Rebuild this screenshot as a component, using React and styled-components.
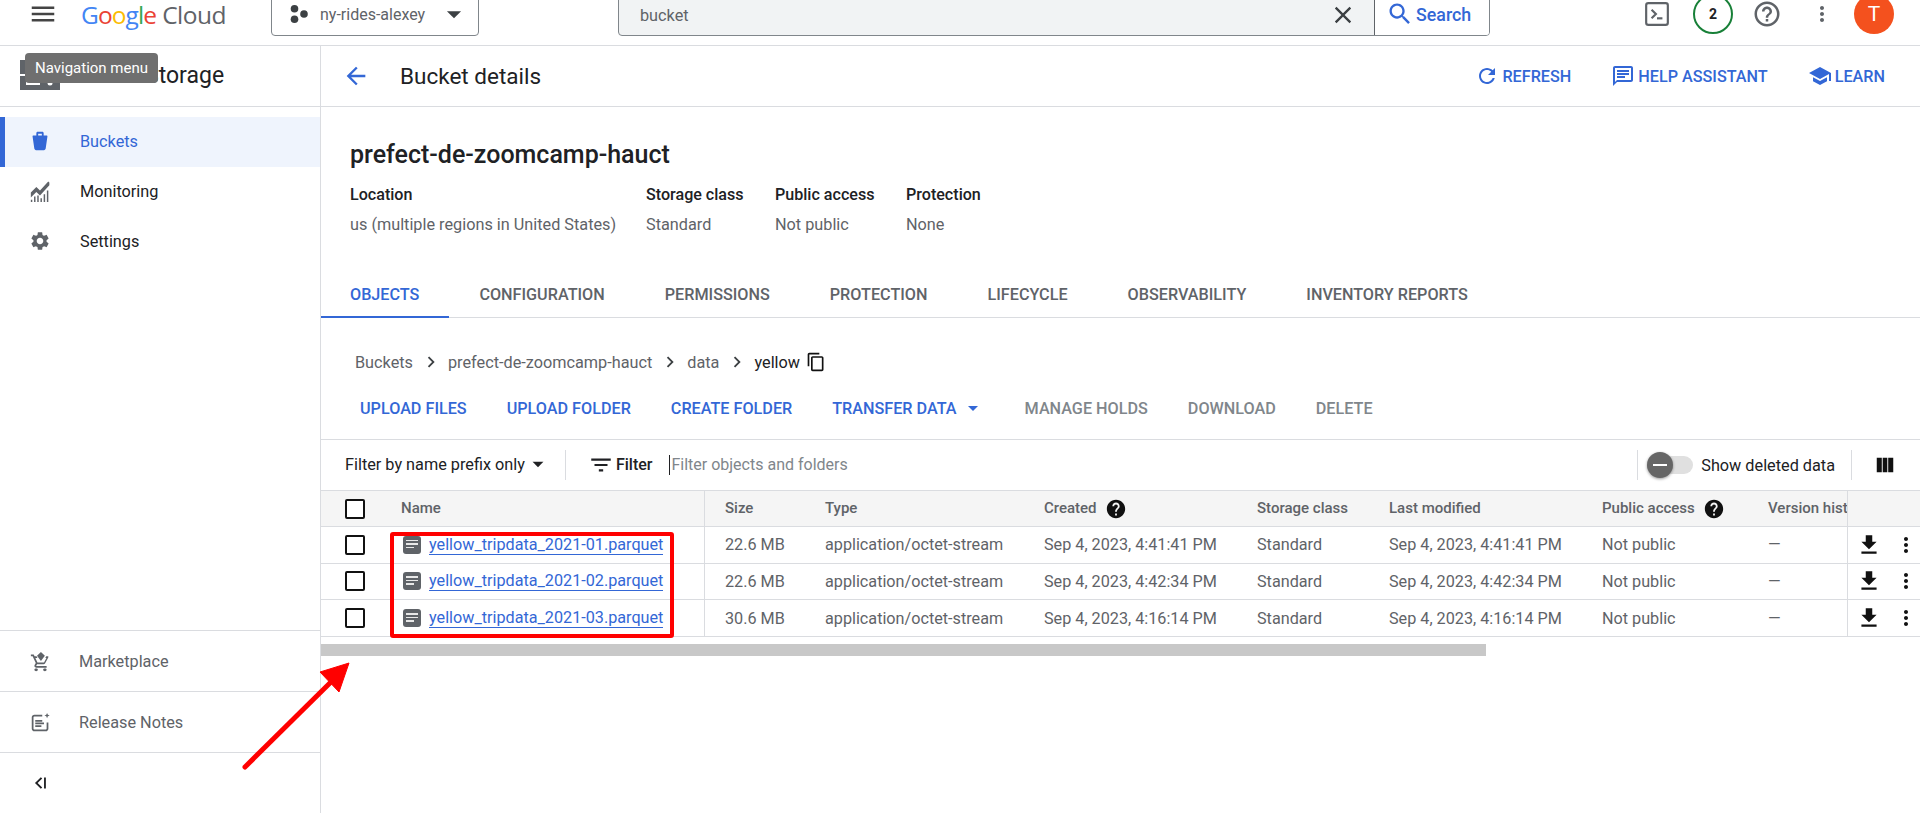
import React from 'react';
import styled, { createGlobalStyle } from 'styled-components';

const BLUE = '#3367d6';
const GREY = '#5f6368';
const LINE = '#dadce0';

const GlobalStyle = createGlobalStyle`
  html, body {
    margin: 0;
    padding: 0;
    background: #fff;
    font-family: Roboto, "Liberation Sans", sans-serif;
  }
  * { box-sizing: border-box; }
`;

const Page = styled.div`
  position: relative;
  display: flex;
  flex-direction: column;
  width: 1920px;
  height: 813px;
  overflow: hidden;
  color: #202124;
  font-size: 16.25px;
`;

const Svg = styled.svg`
  flex: none;
  display: block;
  width: ${(p) => p.$size || 24}px;
  height: ${(p) => p.$size || 24}px;
  fill: ${(p) => p.$color || GREY};
`;

const Icon = ({ d, size, color, children }) => (
  <Svg viewBox="0 0 24 24" $size={size} $color={color}>
    {d ? <path d={d} /> : children}
  </Svg>
);

const paths = {
  menu: 'M3 18h18v-2H3v2zm0-5h18v-2H3v2zm0-7v2h18V6H3z',
  close: 'M19 6.41L17.59 5 12 10.59 6.41 5 5 6.41 10.59 12 5 17.59 6.41 19 12 13.41 17.59 19 19 17.59 13.41 12z',
  search: 'M15.5 14h-.79l-.28-.27C15.41 12.59 16 11.11 16 9.5 16 5.91 13.09 3 9.5 3S3 5.91 3 9.5 5.91 16 9.5 16c1.61 0 3.09-.59 4.23-1.57l.27.28v.79l5 4.99L20.49 19l-4.99-5zm-6 0C7.01 14 5 11.99 5 9.5S7.01 5 9.5 5 14 7.01 14 9.5 11.99 14 9.5 14z',
  helpOutline: 'M11 18h2v-2h-2v2zm1-16C6.48 2 2 6.48 2 12s4.48 10 10 10 10-4.48 10-10S17.52 2 12 2zm0 18c-4.41 0-8-3.59-8-8s3.59-8 8-8 8 3.59 8 8-3.59 8-8 8zm0-14c-2.21 0-4 1.79-4 4h2c0-1.1.9-2 2-2s2 .9 2 2c0 2-3 1.75-3 5h2c0-2.25 3-2.5 3-5 0-2.21-1.79-4-4-4z',
  help: 'M12 2C6.48 2 2 6.48 2 12s4.48 10 10 10 10-4.48 10-10S17.52 2 12 2zm1 17h-2v-2h2v2zm2.07-7.75l-.9.92C13.45 12.9 13 13.5 13 15h-2v-.5c0-1.1.45-2.1 1.17-2.83l1.24-1.26c.37-.36.59-.86.59-1.41 0-1.1-.9-2-2-2s-2 .9-2 2H8c0-2.21 1.79-4 4-4s4 1.79 4 4c0 .88-.36 1.68-.93 2.25z',
  more: 'M12 8c1.1 0 2-.9 2-2s-.9-2-2-2-2 .9-2 2 .9 2 2 2zm0 2c-1.1 0-2 .9-2 2s.9 2 2 2 2-.9 2-2-.9-2-2-2zm0 6c-1.1 0-2 .9-2 2s.9 2 2 2 2-.9 2-2-.9-2-2-2z',
  back: 'M20 11H7.83l5.59-5.59L12 4l-8 8 8 8 1.41-1.41L7.83 13H20v-2z',
  refresh: 'M17.65 6.35C16.2 4.9 14.21 4 12 4c-4.42 0-7.99 3.58-7.99 8s3.57 8 7.99 8c3.73 0 6.84-2.55 7.73-6h-2.08c-.82 2.33-3.04 4-5.65 4-3.31 0-6-2.69-6-6s2.69-6 6-6c1.66 0 3.14.69 4.22 1.78L13 11h7V4l-2.35 2.35z',
  chat: 'M20 2H4c-1.1 0-2 .9-2 2v18l4-4h14c1.1 0 2-.9 2-2V4c0-1.1-.9-2-2-2zm0 14H6l-2 2V4h16v12zM6 12h8v2H6zM6 9h12v2H6zM6 6h12v2H6z',
  school: 'M5 13.18v4L12 21l7-3.82v-4L12 17l-7-3.82zM12 3L1 9l11 6 9-4.91V17h2V9L12 3z',
  gear: 'M19.14 12.94c.04-.3.06-.61.06-.94 0-.32-.02-.64-.07-.94l2.03-1.58c.18-.14.23-.41.12-.61l-1.92-3.32c-.12-.22-.37-.29-.59-.22l-2.39.96c-.5-.38-1.03-.7-1.62-.94l-.36-2.54c-.04-.24-.24-.41-.48-.41h-3.84c-.24 0-.43.17-.47.41l-.36 2.54c-.59.24-1.13.57-1.62.94l-2.39-.96c-.22-.08-.47 0-.59.22L2.74 8.87c-.12.21-.08.47.12.61l2.03 1.58c-.05.3-.09.63-.09.94s.02.64.07.94l-2.03 1.58c-.18.14-.23.41-.12.61l1.92 3.32c.12.22.37.29.59.22l2.39-.96c.5.38 1.03.7 1.62.94l.36 2.54c.05.24.24.41.48.41h3.84c.24 0 .44-.17.47-.41l.36-2.54c.59-.24 1.13-.56 1.62-.94l2.39.96c.22.08.47 0 .59-.22l1.92-3.32c.12-.22.07-.47-.12-.61l-2.01-1.58zM12 15.6c-1.98 0-3.6-1.62-3.6-3.6s1.62-3.6 3.6-3.6 3.6 1.62 3.6 3.6-1.62 3.6-3.6 3.6z',
  chevron: 'M10 6L8.59 7.41 13.17 12l-4.58 4.59L10 18l6-6z',
  copy: 'M16 1H4c-1.1 0-2 .9-2 2v14h2V3h12V1zm3 4H8c-1.1 0-2 .9-2 2v14c0 1.1.9 2 2 2h11c1.1 0 2-.9 2-2V7c0-1.1-.9-2-2-2zm0 16H8V7h11v14z',
  filter: 'M10 18h4v-2h-4v2zM3 6v2h18V6H3zm3 7h12v-2H6v2z',
  download: 'M19 9h-4V3H9v6H5l7 7 7-7zM5 18v2h14v-2H5z',
  caret: 'M7 10l5 5 5-5z',
  bucket: 'M8 3.5C8 2.7 8.7 2 9.5 2h5c.8 0 1.5.7 1.5 1.5V6h3.2c.6 0 1 .5.9 1.1l-1.9 13.2c-.1.9-.9 1.7-1.9 1.7H7.7c-1 0-1.8-.8-1.9-1.7L3.9 7.1C3.800 6.500 4.200 6 4.800 6H8V3.500zM10 4v2h4V4h-4z',
  columns: 'M3 4h5.500v16H3zM9.500 4h5v16h-5zM15.500 4H21v16h-5.500z',
  cart: 'M15.550 15c.750 0 1.410-.410 1.750-1.030l3.580-6.490A.996.996 0 0020.010 6H18.500l-1 2h1.300l-2.760 5H8.530L6.160 8H8.500l-1-2H5.210l-.94-2H1v2h2l3.600 7.590-1.350 2.440C4.520 17.370 5.480 19 7 19h12v-2H7l1.100-2h7.450zM7 20c-1.100 0-1.990.400-1.990 1.500S5.900 23 7 23s2-.400 2-1.500S8.100 20 7 20zm10 0c-1.100 0-1.990.400-1.990 1.500S15.900 23 17 23s2-.400 2-1.500-.900-1.500-2-1.500zM12.500 1L8 5.500l4.500 6 4.500-6z',
  notes: 'M19 12v7c0 .550-.450 1-1 1H5c-.550 0-1-.450-1-1V6c0-.550.450-1 1-1h9V3H5C3.340 3 2 4.340 2 6v13c0 1.660 1.340 3 3 3h13c1.660 0 3-1.340 3-3v-7h-2zM6 9h8v2H6zm0 3h10v2H6zm0 3h7v2H6zM19.500 1l-.900 2.100-2.100.900 2.100.900.900 2.100.900-2.100 2.100-.900-2.100-.900z',
  collapse: 'M15.500 7L14 5.600 7.600 12l6.400 6.400 1.500-1.400-5-5zM17.500 6h2v12h-2z',
  monitoring: 'M2 13.500l6-6 4 4L21 1.500l1.200 1.100v3.200L12 17l-4-4-6 6zM2 21.500h1.600V24H2zM5.500 18h1.600v6H5.500zM9 17h1.600v7H9zM12.500 20h1.600v4h-1.600zM16 15.500h1.600V24H16zM19.500 11.500h1.600V24h-1.600z',
};

/* top bar */
const TopBar = styled.header`
  flex: none;
  display: flex;
  align-items: flex-end;
  height: 46px;
  padding: 0 22px 9px 27px;
  border-bottom: 1px solid ${LINE};
  overflow: hidden;
`;

const TopSlot = styled.div`
  flex: none;
  display: flex;
  align-items: center;
  justify-content: center;
  height: 44px;
  width: ${(p) => p.$width || 40}px;
  margin-left: ${(p) => p.$left || 0}px;
`;

const Logo = styled.div`
  flex: none;
  display: flex;
  align-items: center;
  height: 44px;
  margin-left: 22px;
  width: 190px;
  font-family: "Open Sans", sans-serif;
  font-size: 24.5px;
  letter-spacing: -0.9px;
  white-space: nowrap;
`;

const Letter = styled.span`
  color: ${(p) => p.$color};
`;

const CloudWord = styled.span`
  margin-left: 6px;
  color: ${GREY};
  letter-spacing: -0.5px;
`;

const ProjectPicker = styled.div`
  flex: none;
  display: flex;
  align-items: center;
  width: 208px;
  height: 44px;
  padding: 0 7px 0 18px;
  border: 1px solid #80868b;
  border-radius: 4px;
  color: ${GREY};
  font-size: 16px;
`;

const ProjectName = styled.span`
  flex: 1;
  margin-left: 12px;
`;

const SearchBox = styled.div`
  flex: none;
  display: flex;
  width: 872px;
  height: 44px;
  margin-left: 139px;
  background: #f1f3f4;
  border: 1px solid #80868b;
  border-radius: 4px;
  overflow: hidden;
`;

const SearchInput = styled.div`
  flex: 1;
  display: flex;
  align-items: center;
  justify-content: space-between;
  padding: 2px 17px 0 21px;
  color: ${GREY};
`;

const SearchButton = styled.div`
  flex: none;
  display: flex;
  align-items: center;
  gap: 2px;
  width: 115px;
  height: 42px;
  padding: 0 0 0 11px;
  background: #fff;
  border-left: 1px solid #5f6368;
  color: ${BLUE};
  font-size: 17.8px;
  font-weight: 500;
`;

const Badge = styled.div`
  display: flex;
  align-items: center;
  justify-content: center;
  width: 40px;
  height: 40px;
  border: 2px solid #188038;
  border-radius: 50%;
  color: #202124;
  font-size: 14px;
  font-weight: 700;
`;

const Avatar = styled.div`
  display: flex;
  align-items: center;
  justify-content: center;
  width: 40px;
  height: 40px;
  border-radius: 50%;
  background: #f4511e;
  color: #fff;
  font-size: 21px;
`;

/* side nav */
const Body = styled.div`
  flex: 1;
  display: flex;
  min-height: 0;
`;

const Sidebar = styled.aside`
  flex: none;
  display: flex;
  flex-direction: column;
  width: 321px;
  border-right: 1px solid ${LINE};
`;

const SideHead = styled.div`
  position: relative;
  flex: none;
  display: flex;
  align-items: center;
  gap: 20px;
  height: 61px;
  padding: 0 0 2px 20px;
  border-bottom: 1px solid ${LINE};
  font-size: 23px;
`;

const Tooltip = styled.div`
  position: absolute;
  left: 25px;
  top: 7px;
  width: 133px;
  height: 30px;
  border-radius: 4px;
  background: #6f6f6f;
  color: #fff;
  font-size: 15px;
  line-height: 30px;
  text-align: center;
  white-space: nowrap;
`;

const NavList = styled.nav`
  display: flex;
  flex-direction: column;
  padding-top: 10px;
`;

const NavItem = styled.div`
  display: flex;
  align-items: center;
  gap: 29px;
  height: 50px;
  padding-left: ${(p) => (p.$active ? 24 : 29)}px;
  padding-bottom: 2px;
  border-left: ${(p) => (p.$active ? `5px solid ${BLUE}` : 'none')};
  background: ${(p) => (p.$active ? '#eff4fd' : 'transparent')};
  color: ${(p) => (p.$active ? BLUE : '#202124')};
`;

const SideFoot = styled.div`
  margin-top: auto;
`;

const FootItem = styled.div`
  display: flex;
  align-items: center;
  gap: 28px;
  height: 61px;
  padding-left: ${(p) => p.$pad ?? 30}px;
  border-top: 1px solid ${LINE};
  color: ${GREY};
`;

/* main */
const Main = styled.main`
  flex: 1;
  min-width: 0;
  display: flex;
  flex-direction: column;
`;

const PageHead = styled.div`
  flex: none;
  display: flex;
  align-items: center;
  height: 61px;
  padding: 0 35px 0 21px;
  border-bottom: 1px solid ${LINE};
`;

const PageTitle = styled.h1`
  margin: 0 0 0 30px;
  flex: 1;
  font-size: 22.5px;
  font-weight: 400;
  color: #202124;
`;

const HeadLinks = styled.div`
  display: flex;
  align-items: center;
  gap: 40px;
`;

const HeadLink = styled.div`
  display: flex;
  align-items: center;
  gap: 3px;
  color: ${BLUE};
  font-size: 16.2px;
  font-weight: 500;
`;

const BucketInfo = styled.section`
  flex: none;
  padding: 32px 30px 0 29px;
`;

const BucketName = styled.h2`
  margin: 0;
  font-size: 25px;
  line-height: 32px;
  font-weight: 500;
  color: #202124;
`;

const Facts = styled.div`
  display: flex;
  margin-top: 12px;
`;

const Fact = styled.div`
  width: ${(p) => p.$width}px;
  line-height: 24px;
  color: ${GREY};
`;

const FactLabel = styled.div`
  margin-bottom: 6px;
  color: #202124;
  font-size: 16.1px;
  font-weight: 500;
`;

const Tabs = styled.div`
  flex: none;
  display: flex;
  height: 46px;
  margin-top: 35px;
  border-bottom: 1px solid ${LINE};
`;

const Tab = styled.div`
  display: flex;
  align-items: center;
  height: 46px;
  padding: 0 30px ${(p) => (p.$active ? 0 : 2)}px ${(p) => (p.$active ? 29 : 30)}px;
  color: ${(p) => (p.$active ? BLUE : GREY)};
  border-bottom: ${(p) => (p.$active ? `2px solid ${BLUE}` : 'none')};
  font-size: 16.2px;
  font-weight: 500;
`;

const Crumbs = styled.div`
  flex: none;
  display: flex;
  align-items: center;
  height: 24px;
  margin-top: 32px;
  padding-left: 34px;
  color: ${GREY};
`;

const CrumbSep = styled.div`
  margin: 0 6.5px;
`;

const CrumbHere = styled.span`
  color: #202124;
  margin-right: 6px;
`;

const Actions = styled.div`
  flex: none;
  display: flex;
  align-items: center;
  gap: 40px;
  height: 24px;
  margin-top: 22px;
  padding-left: 39px;
`;

const Action = styled.div`
  display: flex;
  align-items: center;
  gap: 4px;
  color: ${(p) => (p.$off ? '#80868b' : BLUE)};
  font-size: 16.2px;
  font-weight: 500;
`;

const Toolbar = styled.div`
  flex: none;
  display: flex;
  align-items: center;
  height: 51px;
  margin-top: 19px;
  padding: 0 24px 0 24px;
  border-top: 1px solid ${LINE};
`;

const PrefixSelect = styled.div`
  display: flex;
  align-items: center;
  padding-bottom: 2px;
  color: #202124;
`;

const ToolDivider = styled.div`
  flex: none;
  width: 1px;
  height: 30px;
  background: ${LINE};
  margin: ${(p) => p.$margin};
`;

const FilterLabel = styled.span`
  margin-left: 2px;
  padding-bottom: 2px;
  font-size: 16px;
  font-weight: 500;
  color: #202124;
`;

const FilterInput = styled.div`
  flex: 1;
  margin-left: 17px;
  padding-left: 1px;
  border-left: 1px solid #202124;
  color: #80868b;
  font-size: 16px;
  line-height: 20px;
`;

const Toggle = styled.div`
  position: relative;
  width: 46px;
  height: 18px;
  margin: 0 8px 0 9px;
  border-radius: 9px;
  background: #e0e0e0;
`;

const ToggleKnob = styled.div`
  position: absolute;
  left: 0;
  top: -4px;
  width: 26px;
  height: 26px;
  border-radius: 50%;
  background: #666;
  box-shadow: 0 1px 3px rgba(0, 0, 0, 0.4);
  display: flex;
  align-items: center;
  justify-content: center;

  &::after {
    content: '';
    width: 14px;
    height: 2px;
    background: #fff;
  }
`;

const TableWrap = styled.div`
  position: relative;
  flex: none;
`;

const COLS = '65px 319px 100px 219px 213px 132px 213px 166px 99px 73px';

const Row = styled.div`
  display: grid;
  grid-template-columns: ${COLS};
  height: ${(p) => (p.$head ? 37 : 36.67)}px;
  border-bottom: 1px solid ${LINE};
  border-top: ${(p) => (p.$head ? `1px solid ${LINE}` : 'none')};
  background: ${(p) => (p.$head ? '#f5f5f5' : '#fff')};
  color: ${GREY};
  font-size: ${(p) => (p.$head ? 15 : 16.2)}px;
  font-weight: ${(p) => (p.$head ? 500 : 400)};
`;

const Cell = styled.div`
  display: flex;
  align-items: center;
  gap: 8px;
  min-width: 0;
  padding-left: ${(p) => p.$pad ?? 20}px;
  overflow: hidden;
  white-space: nowrap;
  border-right: ${(p) => (p.$rule ? `1px solid ${LINE}` : 'none')};
`;

const HeadLabel = styled.span`
  margin-bottom: 2px;
`;

const ActionCell = styled.div`
  display: flex;
  align-items: center;
  gap: 12px;
  padding-left: 8px;
  border-left: 1px solid ${LINE};
`;

const Checkbox = styled.div`
  width: 20px;
  height: 20px;
  border: 2px solid #111;
  border-radius: 2px;
  background: #fff;
`;

const FileGlyph = styled.div`
  flex: none;
  display: flex;
  flex-direction: column;
  gap: 2px;
  width: 18px;
  height: 18px;
  margin-left: 2px;
  padding: 4px 3px;
  border-radius: 3px;
  background: ${GREY};

  span {
    display: block;
    height: 1.5px;
    background: #e8e8e8;
  }

  span:last-child {
    width: 70%;
  }
`;

const FileLink = styled.a`
  color: ${BLUE};
  border-bottom: 1px solid ${BLUE};
  line-height: 19px;
`;

const ScrollThumb = styled.div`
  flex: none;
  width: 1165px;
  height: 12px;
  margin-top: 7px;
  background: #c8c8c8;
`;

const RedBox = styled.div`
  position: absolute;
  left: 69px;
  top: 42px;
  width: 284px;
  height: 106px;
  border: 4px solid #ff0000;
  border-radius: 3px;
  pointer-events: none;
`;

const ArrowOverlay = styled.svg`
  position: absolute;
  left: 0;
  top: 0;
  width: 1920px;
  height: 813px;
  pointer-events: none;
`;

const files = [
  { name: 'yellow_tripdata_2021-01.parquet', size: '22.6 MB', time: 'Sep 4, 2023, 4:41:41 PM' },
  { name: 'yellow_tripdata_2021-02.parquet', size: '22.6 MB', time: 'Sep 4, 2023, 4:42:34 PM' },
  { name: 'yellow_tripdata_2021-03.parquet', size: '30.6 MB', time: 'Sep 4, 2023, 4:16:14 PM' },
];

const tabs = ['OBJECTS', 'CONFIGURATION', 'PERMISSIONS', 'PROTECTION', 'LIFECYCLE', 'OBSERVABILITY', 'INVENTORY REPORTS'];

const google = [
  ['G', '#4285f4'], ['o', '#ea4335'], ['o', '#fbbc04'], ['g', '#4285f4'], ['l', '#34a853'], ['e', '#ea4335'],
];

const App = () => (
  <Page>
    <GlobalStyle />
    <TopBar>
      <TopSlot $width={32}><Icon d={paths.menu} size={30} color="#444" /></TopSlot>
      <Logo>
        {google.map(([ch, color], i) => <Letter key={i} $color={color}>{ch}</Letter>)}
        <CloudWord>Cloud</CloudWord>
      </Logo>
      <ProjectPicker>
        <Svg viewBox="0 0 18 18" $size={18} $color="#3c4043">
          <circle cx="4.500" cy="3.800" r="3.800" />
          <circle cx="14" cy="9" r="3.800" />
          <circle cx="4.500" cy="14.200" r="3.800" />
        </Svg>
        <ProjectName>ny-rides-alexey</ProjectName>
        <Icon d={paths.caret} size={34} color="#3c4043" />
      </ProjectPicker>
      <SearchBox>
        <SearchInput>
          bucket
          <Icon d={paths.close} size={28} color="#3c4043" />
        </SearchInput>
        <SearchButton>
          <Icon d={paths.search} size={28} color={BLUE} />
          Search
        </SearchButton>
      </SearchBox>
      <TopSlot $left={147}>
        <Svg viewBox="0 0 24 24" $size={26} $color="none">
          <rect x="2" y="2" width="20" height="20" rx="2" fill="none" stroke="#5f6368" strokeWidth="2" />
          <path d="M7 8l4 4-4 4" fill="none" stroke="#5f6368" strokeWidth="2" />
          <path d="M12 16h5" stroke="#5f6368" strokeWidth="2" />
        </Svg>
      </TopSlot>
      <TopSlot $left={16}><Badge>2</Badge></TopSlot>
      <TopSlot $left={14}><Icon d={paths.helpOutline} size={30} /></TopSlot>
      <TopSlot $left={15}><Icon d={paths.more} size={24} /></TopSlot>
      <TopSlot $left={12}><Avatar>T</Avatar></TopSlot>
    </TopBar>

    <Body>
      <Sidebar>
        <SideHead>
          <Svg viewBox="0 0 40 30" $size={40} $color={GREY}>
            <rect x="0" y="0" width="40" height="14" />
            <rect x="0" y="16" width="40" height="14" />
            <rect x="6" y="5" width="14" height="4" fill="#fff" />
            <rect x="6" y="21" width="14" height="4" fill="#fff" />
            <circle cx="30" cy="7" r="2.500" fill="#fff" />
            <circle cx="30" cy="23" r="2.500" fill="#fff" />
          </Svg>
          Cloud Storage
          <Tooltip>Navigation menu</Tooltip>
        </SideHead>
        <NavList>
          <NavItem $active>
            <Icon d={paths.bucket} size={22} color={BLUE} />
            Buckets
          </NavItem>
          <NavItem>
            <Icon d={paths.monitoring} size={22} />
            Monitoring
          </NavItem>
          <NavItem>
            <Icon d={paths.gear} size={22} />
            Settings
          </NavItem>
        </NavList>
        <SideFoot>
          <FootItem>
            <Icon d={paths.cart} size={21} />
            Marketplace
          </FootItem>
          <FootItem>
            <Icon d={paths.notes} size={21} />
            Release Notes
          </FootItem>
          <FootItem $pad={28}>
            <Icon d={paths.collapse} size={22} color="#202124" />
          </FootItem>
        </SideFoot>
      </Sidebar>

      <Main>
        <PageHead>
          <Icon d={paths.back} size={28} color={BLUE} />
          <PageTitle>Bucket details</PageTitle>
          <HeadLinks>
            <HeadLink><Icon d={paths.refresh} size={24} color={BLUE} />REFRESH</HeadLink>
            <HeadLink><Icon d={paths.chat} size={24} color={BLUE} />HELP ASSISTANT</HeadLink>
            <HeadLink><Icon d={paths.school} size={24} color={BLUE} />LEARN</HeadLink>
          </HeadLinks>
        </PageHead>

        <BucketInfo>
          <BucketName>prefect-de-zoomcamp-hauct</BucketName>
          <Facts>
            <Fact $width={296}><FactLabel>Location</FactLabel>us (multiple regions in United States)</Fact>
            <Fact $width={129}><FactLabel>Storage class</FactLabel>Standard</Fact>
            <Fact $width={131}><FactLabel>Public access</FactLabel>Not public</Fact>
            <Fact $width={120}><FactLabel>Protection</FactLabel>None</Fact>
          </Facts>
        </BucketInfo>

        <Tabs>
          {tabs.map((t, i) => <Tab key={t} $active={i === 0}>{t}</Tab>)}
        </Tabs>

        <Crumbs>
          Buckets
          <CrumbSep><Icon d={paths.chevron} size={22} color="#3c4043" /></CrumbSep>
          prefect-de-zoomcamp-hauct
          <CrumbSep><Icon d={paths.chevron} size={22} color="#3c4043" /></CrumbSep>
          data
          <CrumbSep><Icon d={paths.chevron} size={22} color="#3c4043" /></CrumbSep>
          <CrumbHere>yellow</CrumbHere>
          <Icon d={paths.copy} size={20} color="#111" />
        </Crumbs>

        <Actions>
          <Action>UPLOAD FILES</Action>
          <Action>UPLOAD FOLDER</Action>
          <Action>CREATE FOLDER</Action>
          <Action>TRANSFER DATA<Icon d={paths.caret} size={24} color={BLUE} /></Action>
          <Action $off>MANAGE HOLDS</Action>
          <Action $off>DOWNLOAD</Action>
          <Action $off>DELETE</Action>
        </Actions>

        <Toolbar>
          <PrefixSelect>
            Filter by name prefix only
            <Icon d={paths.caret} size={26} color="#202124" />
          </PrefixSelect>
          <ToolDivider $margin="0 22px 0 14px" />
          <Icon d={paths.filter} size={26} color="#202124" />
          <FilterLabel>Filter</FilterLabel>
          <FilterInput>Filter objects and folders</FilterInput>
          <ToolDivider $margin="0" />
          <Toggle><ToggleKnob /></Toggle>
          Show deleted data
          <ToolDivider $margin="0 22px 0 16px" />
          <Icon d={paths.columns} size={22} color="#111" />
        </Toolbar>

        <TableWrap>
          <Row $head>
            <Cell $pad={24}><Checkbox /></Cell>
            <Cell $pad={15} $rule><HeadLabel>Name</HeadLabel></Cell>
            <Cell><HeadLabel>Size</HeadLabel></Cell>
            <Cell><HeadLabel>Type</HeadLabel></Cell>
            <Cell><HeadLabel>Created</HeadLabel><Icon d={paths.help} size={22} color="#111" /></Cell>
            <Cell><HeadLabel>Storage class</HeadLabel></Cell>
            <Cell><HeadLabel>Last modified</HeadLabel></Cell>
            <Cell><HeadLabel>Public access</HeadLabel><Icon d={paths.help} size={22} color="#111" /></Cell>
            <Cell><HeadLabel>Version history</HeadLabel></Cell>
            <ActionCell />
          </Row>
          {files.map((f) => (
            <Row key={f.name}>
              <Cell $pad={24}><Checkbox /></Cell>
              <Cell $pad={15} $rule>
                <FileGlyph><span /><span /><span /></FileGlyph>
                <FileLink>{f.name}</FileLink>
              </Cell>
              <Cell>{f.size}</Cell>
              <Cell>application/octet-stream</Cell>
              <Cell>{f.time}</Cell>
              <Cell>Standard</Cell>
              <Cell>{f.time}</Cell>
              <Cell>Not public</Cell>
              <Cell>—</Cell>
              <ActionCell>
                <Icon d={paths.download} size={26} color="#111" />
                <Icon d={paths.more} size={24} color="#111" />
              </ActionCell>
            </Row>
          ))}
          <RedBox />
        </TableWrap>
        <ScrollThumb />
      </Main>
    </Body>

    <ArrowOverlay viewBox="0 0 1920 813">
      <path d="M245 767L333 680" stroke="#ff0000" strokeWidth="5" strokeLinecap="round" fill="none" />
      <path d="M349 663L320 672L339 692Z" fill="#ff0000" stroke="#ff0000" strokeWidth="1" strokeLinejoin="round" />
    </ArrowOverlay>
  </Page>
);

export default App;
